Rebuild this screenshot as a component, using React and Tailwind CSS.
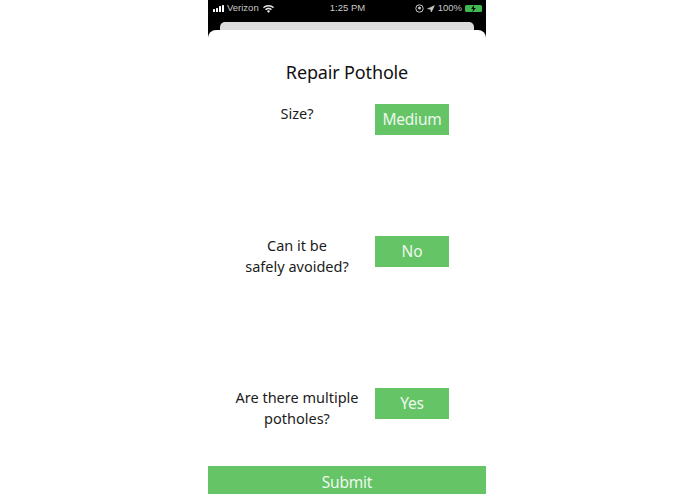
import { Navigation } from "lucide-react";

const FONT = "font-['Noto_Sans',sans-serif]";

function StatusBar() {
  return (
    <div className="flex h-[16px] items-center justify-between pt-[1px] pl-[5px] pr-[4px] font-['Liberation_Sans',sans-serif] text-[9.5px] text-[#c9c9c9]">
      <div className="flex w-[90px] items-center gap-[3px]">
        <div className="flex items-end gap-[1px]">
          <span className="h-[3px] w-[2px] rounded-[0.5px] bg-white" />
          <span className="h-[4px] w-[2px] rounded-[0.5px] bg-white" />
          <span className="h-[6px] w-[2px] rounded-[0.5px] bg-white" />
          <span className="h-[7px] w-[2px] rounded-[0.5px] bg-white" />
        </div>
        <span>Verizon</span>
        <svg width="11" height="8" viewBox="0 0 11 8" fill="#e5e5e5" className="ml-[1px]">
          <path d="M5.5 0C3.4 0 1.5.8 0 2.2l1 1.1C2.2 2.2 3.8 1.5 5.5 1.5s3.3.7 4.5 1.8l1-1.1C9.5.8 7.6 0 5.5 0z" />
          <path d="M5.5 2.8c-1.3 0-2.5.5-3.4 1.4l1 1.1c.7-.6 1.5-1 2.4-1s1.7.4 2.4 1l1-1.1C8 3.3 6.8 2.8 5.5 2.8z" />
          <path d="M5.5 5.3c-.7 0-1.2.2-1.6.6L5.5 8l1.6-2.1c-.4-.4-.9-.6-1.6-.6z" />
        </svg>
      </div>
      <span className="font-medium">1:25 PM</span>
      <div className="flex w-[90px] items-center justify-end gap-[3px]">
        <svg width="9" height="9" viewBox="0 0 9 9" fill="none" stroke="#c9c9c9">
          <circle cx="4.5" cy="4.5" r="3.7" />
          <circle cx="4.5" cy="4" r="1.5" fill="#c9c9c9" stroke="none" />
        </svg>
        <Navigation size={8} fill="currentColor" />
        <span>100%</span>
        <div className="flex h-[7px] w-[17px] items-center justify-center rounded-[1.5px] bg-[#3fb950]">
          <svg width="7" height="7" viewBox="0 0 6 6" fill="#000">
            <path d="M3.4 0 1 3.4h1.6L2.2 6 5 2.5H3.3z" />
          </svg>
        </div>
      </div>
    </div>
  );
}

function Question({ lines, answer, className }) {
  return (
    <div className={`flex items-start ${className}`}>
      <div className="-mt-[1px] ml-[14px] flex w-[150px] flex-col items-center whitespace-nowrap text-[14.5px] leading-[21px] text-[#1c1c1c]">
        {lines.map((line) => (
          <span key={line}>{line}</span>
        ))}
      </div>
      <div className="ml-[3px] flex h-[31px] w-[74px] items-center justify-center bg-[#65c466] text-[15.5px] tracking-[-0.2px] text-[#eef8ee]">
        {answer}
      </div>
    </div>
  );
}

export default function App() {
  return (
    <div className={`flex h-[494px] w-[695px] overflow-hidden bg-white pl-[208px] ${FONT}`}>
      <div className="flex w-[278px] flex-col bg-black">
        <StatusBar />
        <div className="mx-[12px] mt-[6px] h-[8px] rounded-t-[5px] bg-[#dcdcdc]" />
        <div className="flex flex-1 flex-col rounded-t-[8px] bg-white">
          <h1 className="mt-[28px] text-center text-[18px] leading-[28px] font-normal tracking-[-0.15px] text-[#111]">
            Repair Pothole
          </h1>
          <Question className="mt-[18px]" lines={["Size?"]} answer="Medium" />
          <Question className="mt-[101px]" lines={["Can it be", "safely avoided?"]} answer="No" />
          <Question className="mt-[111px]" lines={["Are there multiple", "potholes?"]} answer="Yes" />
          <div className="mt-auto flex h-[28px] items-center justify-center bg-[#65c466] pt-[5px] text-[15.5px] tracking-[-0.2px] text-[#eef8ee]">
            Submit
          </div>
        </div>
      </div>
    </div>
  );
}
